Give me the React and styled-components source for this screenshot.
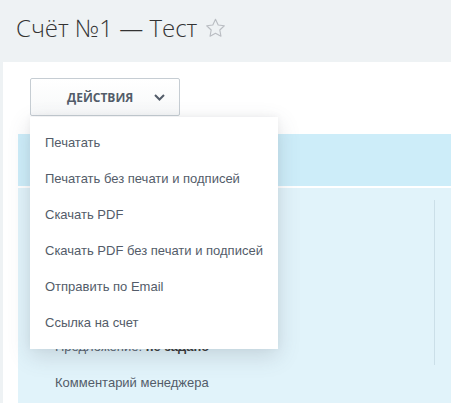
import React from 'react';
import styled, { createGlobalStyle } from 'styled-components';

const GlobalStyle = createGlobalStyle`
  html, body {
    margin: 0;
    padding: 0;
    background: #eef2f4;
    overflow: hidden;
  }
`

// page title area
const Header = styled.header`
  height: 62px;
  box-sizing: border-box;
  padding: 13px 16px 0;
  display: flex;
  align-items: center;
  align-self: flex-start;
  gap: 8px;
  height: 62px;
  align-items: flex-start;
`

const Title = styled.h1`
  margin: 0;
  font-family: "Open Sans", "Liberation Sans", sans-serif;
  font-weight: 300;
  font-size: 24px;
  line-height: 30px;
  color: #333;
`

const Star = styled.span`
  display: flex;
  margin-top: 5px;
  color: #b9bdc2;
`

// white work area
const Panel = styled.main`
  margin-left: 3px;
  background: #fff;
  padding-top: 16px;
  min-height: 341px;
`

const Toolbar = styled.div`
  position: relative;
  padding-left: 27px;
  height: 38px;
`

const ActionButton = styled.button`
  width: 150px;
  height: 38px;
  box-sizing: border-box;
  display: flex;
  align-items: center;
  padding: 0 14px 0 36px;
  justify-content: space-between;
  border: 1px solid #c6cdd3;
  border-radius: 2px;
  background: linear-gradient(#fff, #f7f8f9);
  font-family: "Open Sans", "Liberation Sans", sans-serif;
  font-weight: 700;
  font-size: 12px;
  color: #535c69;
  cursor: pointer;
`

const Menu = styled.ul`
  position: absolute;
  top: 39px;
  left: 27px;
  width: 248px;
  margin: 0;
  padding: 8px 0;
  list-style: none;
  background: #fff;
  box-shadow: 0 7px 21px rgba(83, 92, 105, 0.2), 0 -1px 6px rgba(83, 92, 105, 0.06);
  z-index: 10;
`

const MenuItem = styled.li`
  height: 36px;
  line-height: 36px;
  padding-left: 15px;
  font-family: "Liberation Sans", Arial, sans-serif;
  font-size: 13px;
  color: #535c69;
  cursor: pointer;
  white-space: nowrap;
`

const Section = styled.section`
  margin: 18px 0 0 15px;
`

const Band = styled.div`
  height: 52px;
  background: #cdedf9;
  margin-bottom: 2px;
`

const Body = styled.div`
  background: #e1f3fa;
  display: flex;
  padding-top: 12px;
  min-height: 203px;
`

const Fields = styled.div`
  flex: 1;
  padding: 129px 0 0 37px;
`

const Field = styled.div`
  height: 36px;
  line-height: 36px;
  font-family: "Liberation Sans", Arial, sans-serif;
  font-size: 13px;
  color: #535c69;

  b {
    color: #333;
  }
`

const Side = styled.aside`
  width: 16px;
  height: 165px;
  border-left: 1px solid #cbdfe8;
`

const menuItems = [
  'Печатать',
  'Печатать без печати и подписей',
  'Скачать PDF',
  'Скачать PDF без печати и подписей',
  'Отправить по Email',
  'Ссылка на счет',
]

const StarIcon = () => (
  <svg width="21" height="19" viewBox="0 0 24 22" fill="none" stroke="currentColor" strokeWidth="1.3" strokeLinejoin="round">
    <path d="M12 1.5l3.1 6.6 7.1.9-5.2 4.9 1.3 7.1L12 17.6 5.7 21l1.3-7.1L1.8 9l7.1-.9z" />
  </svg>
)

const Chevron = () => (
  <svg width="11" height="7" viewBox="0 0 11 7" fill="none" stroke="#535c69" strokeWidth="2">
    <path d="M1 1l4.5 4.5L10 1" />
  </svg>
)

export default function App() {
  return (
    <>
      <GlobalStyle />
      <Header>
        <Title>Счёт №1 — Тест</Title>
        <Star><StarIcon /></Star>
      </Header>
      <Panel>
        <Toolbar>
          <ActionButton>
            <span>ДЕЙСТВИЯ</span>
            <Chevron />
          </ActionButton>
          <Menu>
            {menuItems.map((item) => (
              <MenuItem key={item}>{item}</MenuItem>
            ))}
          </Menu>
        </Toolbar>
        <Section>
          <Band />
          <Body>
            <Fields>
              <Field>Предложение: <b>не задано</b></Field>
              <Field>Комментарий менеджера</Field>
            </Fields>
            <Side />
          </Body>
        </Section>
      </Panel>
    </>
  );
}
